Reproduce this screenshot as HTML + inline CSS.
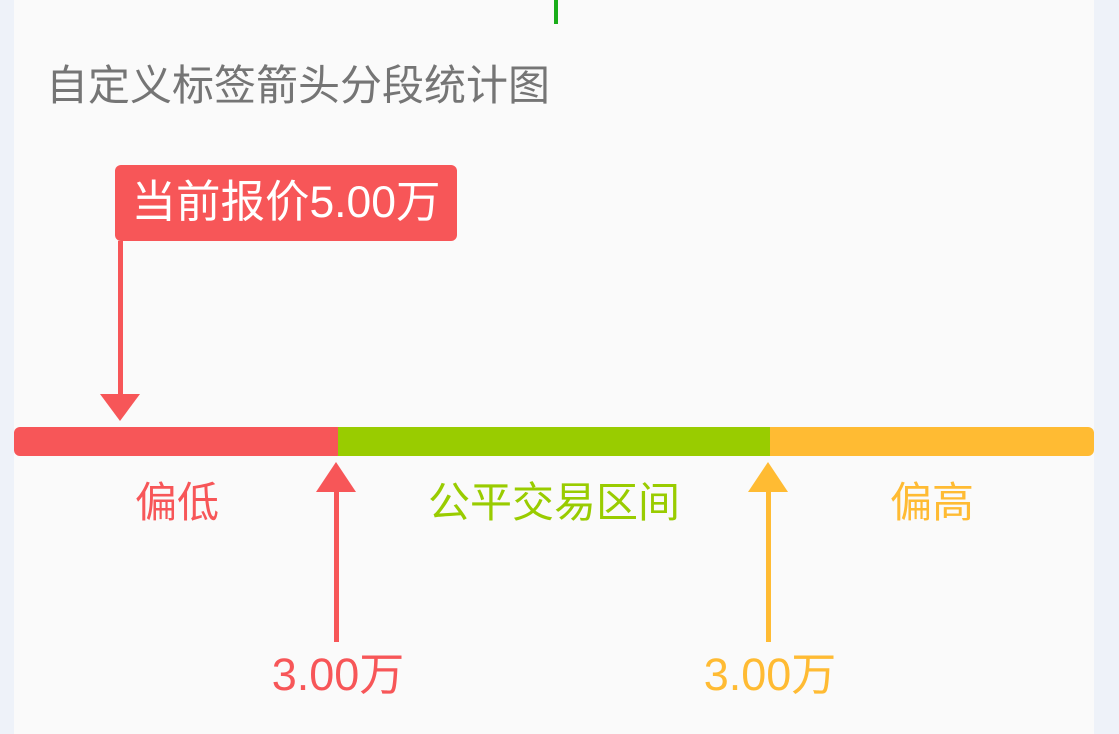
<!DOCTYPE html>
<html><head><meta charset="utf-8"><style>
body{margin:0;width:1119px;height:734px;background:#eef2f9;position:relative;overflow:hidden;font-family:"Liberation Sans","Noto Sans CJK SC",sans-serif}
.card{position:absolute;left:14px;top:0;width:1080px;height:734px;background:#fafafa}
.t{position:absolute;white-space:nowrap;line-height:1}
.c{transform:translateX(-50%)}
</style></head><body>
<div class="card"></div>
<div style="position:absolute;left:554px;top:0;width:4px;height:24px;background:#1aad19"></div>
<div class="t" style="left:46px;top:65px;font-size:42px;color:#757575">自定义标签箭头分段统计图</div>
<div style="position:absolute;left:115px;top:165px;width:342px;height:76px;background:#f75658;border-radius:6px"></div>
<div class="t c" style="left:286px;top:181px;font-size:44.5px;color:#fff">当前报价5.00万</div>
<svg style="position:absolute;left:0;top:0" width="1119" height="734">
<rect x="118" y="241" width="5" height="156" fill="#f75658"/>
<polygon points="100,394 140,394 120,421" fill="#f75658"/>
<path d="M20,427 H338 V456 H20 A6,6 0 0 1 14,450 V433 A6,6 0 0 1 20,427Z" fill="#f75658"/>
<rect x="338" y="427" width="432" height="29" fill="#99cc00"/>
<path d="M770,427 H1088 A6,6 0 0 1 1094,433 V450 A6,6 0 0 1 1088,456 H770Z" fill="#ffbb33"/>
<polygon points="336,462 316,492 356,492" fill="#f75658"/>
<rect x="334" y="490" width="5" height="152" fill="#f75658"/>
<polygon points="768,462 748,492 788,492" fill="#ffbb33"/>
<rect x="766" y="490" width="5" height="152" fill="#ffbb33"/>
</svg>
<div class="t c" style="left:177px;top:482px;font-size:42px;color:#f75658">偏低</div>
<div class="t c" style="left:554px;top:482px;font-size:42px;color:#99cc00">公平交易区间</div>
<div class="t c" style="left:932px;top:482px;font-size:42px;color:#ffbb33">偏高</div>
<div class="t c" style="left:338px;top:652px;font-size:45px;color:#f75658">3.00万</div>
<div class="t c" style="left:770px;top:652px;font-size:45px;color:#ffbb33">3.00万</div>
</body></html>
